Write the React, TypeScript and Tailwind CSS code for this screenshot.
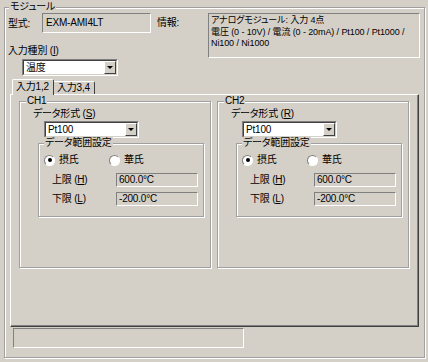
import React from "react";

function Group({
  title,
  className = "",
  titleClass = "ml-[6px]",
  children,
}: {
  title: string;
  className?: string;
  titleClass?: string;
  children?: React.ReactNode;
}) {
  return (
    <div className={"border border-[#a0a0a0] shadow-[inset_1px_1px_0_#fff,1px_1px_0_#fff] " + className}>
      <div className={"-mt-[7px] w-fit bg-[#d4d0c8] px-[1px] h-[12px] leading-[12px] whitespace-nowrap " + titleClass}>
        {title}
      </div>
      {children}
    </div>
  );
}

function Combo({ value, className = "" }: { value: string; className?: string }) {
  return (
    <div className={"flex h-[17px] bg-white border border-t-[#808080] border-l-[#808080] border-b-white border-r-white " + className}>
      <div className="flex flex-1 border-t border-l border-t-[#404040] border-l-[#404040] border-b border-r border-b-[#d4d0c8] border-r-[#d4d0c8]">
        <span className="flex-1 pl-[2px] leading-[13px] whitespace-nowrap">{value}</span>
        <div className="flex w-[12px] items-center justify-center bg-[#d4d0c8] border border-t-white border-l-white border-b-[#404040] border-r-[#404040]">
          <div className="w-0 h-0 border-x-[3px] border-x-transparent border-t-[3px] border-t-black" />
        </div>
      </div>
    </div>
  );
}

function Sunken({ children, className = "" }: { children?: React.ReactNode; className?: string }) {
  return (
    <div className={"border border-t-[#808080] border-l-[#808080] border-b-white border-r-white whitespace-nowrap " + className}>
      {children}
    </div>
  );
}

function Radio({ checked, label }: { checked?: boolean; label: string }) {
  return (
    <div className="flex items-center">
      <div className="flex w-[11px] h-[11px] items-center justify-center rounded-full bg-white border border-t-[#808080] border-l-[#808080] border-b-white border-r-white">
        {checked ? <div className="w-[4px] h-[4px] rounded-full bg-black" /> : null}
      </div>
      <span className="ml-[4px] leading-[12px]">{label}</span>
    </div>
  );
}

function Channel({ name, key1 }: { name: string; key1: string }) {
  return (
    <Group title={name} className="w-[192px] h-[167px]">
      <div className="ml-[13px] mt-[1px] h-[12px] leading-[12px] whitespace-nowrap">
        データ形式 (<u>{key1}</u>)
      </div>
      <Combo value="Pt100" className="ml-[24px] mt-[1px] w-[95px]" />
      <Group title="データ範囲設定" titleClass="ml-[5px]" className="ml-[18px] mt-[5px] w-[166px] h-[74px]">
        <div className="flex items-center mt-[5px] ml-[5px] h-[12px]">
          <div className="w-[65px]">
            <Radio checked label="摂氏" />
          </div>
          <Radio label="華氏" />
        </div>
        <div className="flex items-center mt-[7px] ml-[13px]">
          <div className="w-[64px] leading-[12px] whitespace-nowrap">
            上限 (<u>H</u>)
          </div>
          <Sunken className="w-[82px] h-[14px] pl-[2px] leading-[12px]">600.0°C</Sunken>
        </div>
        <div className="flex items-center mt-[5px] ml-[13px]">
          <div className="w-[64px] leading-[12px] whitespace-nowrap">
            下限 (<u>L</u>)
          </div>
          <Sunken className="w-[82px] h-[14px] pl-[2px] leading-[12px]">-200.0°C</Sunken>
        </div>
      </Group>
    </Group>
  );
}

export default function App() {
  return (
    <div className="w-[428px] h-[362px] bg-[#d4d0c8] pt-[7px] pl-[4px] text-[10px] tracking-[-0.2px] text-black font-['Liberation_Sans','Noto_Sans_CJK_JP',sans-serif] [font-feature-settings:'palt']">
      <Group title="モジュール" titleClass="ml-[4px]" className="w-[421px] h-[351px]">
        <div className="flex pl-[3px]">
          <div className="flex flex-col">
            <div className="flex h-[20px] items-center">
              <div className="w-[34px]">型式:</div>
              <Sunken className="w-[109px] h-[20px] pl-[3px] leading-[18px]">EXM-AMI4LT</Sunken>
            </div>
            <div className="mt-[12px] h-[12px] leading-[12px] whitespace-nowrap">
              入力種別 (<u>I</u>)
            </div>
            <Combo value="温度" className="ml-[14px] mt-[2px] w-[96px]" />
          </div>
          <div className="flex ml-[6px]">
            <div className="w-[51px] h-[20px] leading-[20px]">情報:</div>
            <Sunken className="w-[212px] h-[45px] pl-[2px] pt-[1px] text-[9px] tracking-[-0.1px] leading-[11.5px]">
              <div>アナログモジュール: 入力 4点</div>
              <div>電圧 (0 - 10V) / 電流 (0 - 20mA) / Pt100 / Pt1000 /</div>
              <div>Ni100 / Ni1000</div>
            </Sunken>
          </div>
        </div>
        <div className="flex items-end ml-[5px] mt-[3px] h-[15px]">
          <div className="relative z-10 ml-[2px] -mb-[1px] h-[16px] w-[42px] bg-[#d4d0c8] border-t border-l border-r border-t-white border-l-white border-r-[#404040] rounded-t-[2px] pl-[3px] leading-[13px] whitespace-nowrap">
            入力1,2
          </div>
          <div className="h-[13px] w-[41px] border-t border-r border-t-white border-r-[#404040] rounded-tr-[2px] pl-[3px] leading-[11px] whitespace-nowrap">
            入力3,4
          </div>
        </div>
        <div className="ml-[5px] w-[409px] h-[233px] border border-t-white border-l-white border-r-[#404040] border-b-[#404040] shadow-[inset_-1px_-1px_0_#808080]">
          <div className="flex gap-[6px] pl-[8px] pt-[6px]">
            <Channel name="CH1" key1="S" />
            <Channel name="CH2" key1="R" />
          </div>
        </div>
        <Sunken className="ml-[8px] mt-[1px] w-[231px] h-[20px]" />
      </Group>
    </div>
  );
}
